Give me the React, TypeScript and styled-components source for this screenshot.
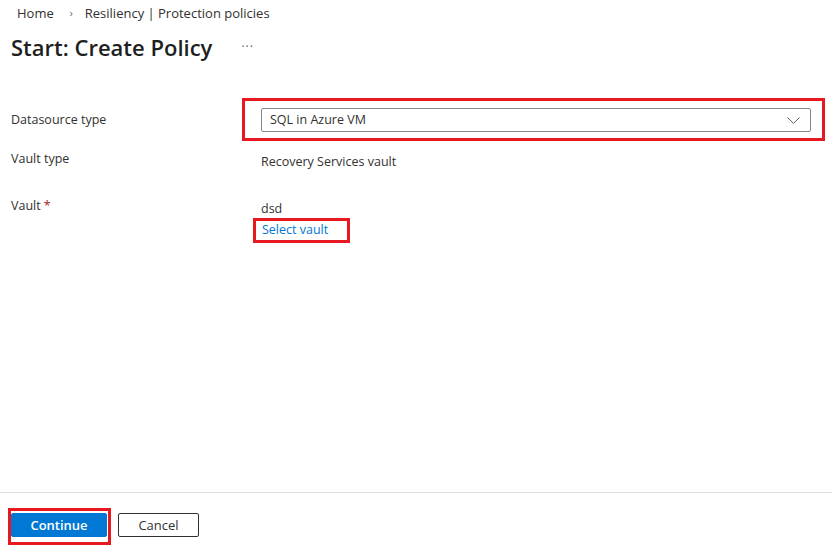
import React from "react";
import styled, { createGlobalStyle } from "styled-components";

const GlobalStyle = createGlobalStyle`
  html, body {
    margin: 0;
    padding: 0;
    background: #ffffff;
  }
  body {
    font-family: "Open Sans", "Noto Sans", sans-serif;
    font-size: 13px;
    color: #323130;
  }
`;

const Page = styled.div`
  display: flex;
  flex-direction: column;
  height: 545px;
  overflow: hidden;
`;

const Header = styled.header`
  padding: 4px 0 0 17px;
`;

const Breadcrumb = styled.nav`
  display: flex;
  align-items: center;
  line-height: 18px;
`;

const Crumb = styled.span`
  color: #323130;
`;

const CrumbSep = styled.span`
  margin: 0 12px 0 16px;
  font-size: 10px;
  color: #605e5c;
`;

const TitleRow = styled.div`
  display: flex;
  align-items: center;
  margin: 9px 0 0 -6px;
  line-height: 32px;
`;

const Title = styled.h1`
  margin: 0;
  font-size: 22px;
  font-weight: 600;
  color: #201f1e;
`;

const More = styled.span`
  margin-left: 29px;
  font-size: 12px;
  letter-spacing: 1px;
  color: #605e5c;
`;

const Form = styled.div`
  display: flex;
  flex-direction: column;
  margin-top: 35px;
  font-size: 12.5px;
`;

const Row = styled.div<{ $gap?: number; $center?: boolean }>`
  display: grid;
  grid-template-columns: 261px 1fr;
  align-items: ${(p) => (p.$center ? "center" : "start")};
  margin-top: ${(p) => p.$gap ?? 0}px;
  line-height: 18px;
`;

const Label = styled.div`
  padding-left: 11px;
`;

const Required = styled.span`
  color: #a4262c;
  margin-left: 3px;
`;

const Value = styled.div<{ $offset?: number }>`
  padding-top: ${(p) => p.$offset ?? 0}px;
  display: flex;
  flex-direction: column;
  align-items: flex-start;
`;

const Highlight = styled.div`
  border: 3px solid #e5191f;
`;

const SelectBox = styled(Highlight)`
  margin-left: -19px;
  margin-right: 7px;
  padding: 7px 11px 6px 16px;
`;

const Dropdown = styled.div`
  display: flex;
  align-items: center;
  justify-content: space-between;
  height: 22px;
  border: 1px solid #8a8886;
  border-radius: 2px;
  padding: 0 10px 0 8px;
  color: #323130;
`;

const LinkBox = styled(Highlight)`
  margin: 0 0 0 -8px;
  padding: 0 19px 1px 6px;
`;

const Link = styled.a`
  color: #0078d4;
  text-decoration: none;
`;

const Spacer = styled.div`
  flex: 1;
`;

const Footer = styled.footer`
  display: flex;
  align-items: flex-start;
  gap: 7px;
  border-top: 1px solid #e1dfdd;
  padding: 15px 0 0 8px;
`;

const ButtonBox = styled(Highlight)`
  padding: 2px 1px 5px 0;
`;

const Button = styled.button<{ $primary?: boolean }>`
  height: 24px;
  border-radius: 2px;
  font-family: inherit;
  font-size: 13px;
  padding: 0;
  cursor: pointer;
  width: ${(p) => (p.$primary ? 96 : 81)}px;
  font-weight: ${(p) => (p.$primary ? 600 : 400)};
  color: ${(p) => (p.$primary ? "#ffffff" : "#323130")};
  background: ${(p) => (p.$primary ? "#0078d4" : "#ffffff")};
  border: 1px solid ${(p) => (p.$primary ? "#0078d4" : "#323130")};
`;

const CancelButton = styled(Button)`
  margin-top: 5px;
`;

const Chevron = () => (
  <svg width="13" height="7" viewBox="0 0 13 7" fill="none">
    <path d="M0.5 0.5 L6.5 6.3 L12.5 0.5" stroke="#605e5c" strokeWidth="1" />
  </svg>
);

export default function App() {
  return (
    <Page>
      <GlobalStyle />
      <Header>
        <Breadcrumb>
          <Crumb>Home</Crumb>
          <CrumbSep>›</CrumbSep>
          <Crumb>Resiliency | Protection policies</Crumb>
        </Breadcrumb>
        <TitleRow>
          <Title>Start: Create Policy</Title>
          <More>···</More>
        </TitleRow>
      </Header>

      <Form>
        <Row $center>
          <Label>Datasource type</Label>
          <SelectBox>
            <Dropdown>
              <span>SQL in Azure VM</span>
              <Chevron />
            </Dropdown>
          </SelectBox>
        </Row>
        <Row $gap={9}>
          <Label>Vault type</Label>
          <Value $offset={3}>Recovery Services vault</Value>
        </Row>
        <Row $gap={26}>
          <Label>
            Vault<Required>*</Required>
          </Label>
          <Value $offset={3}>
            <span>dsd</span>
            <LinkBox>
              <Link href="#">Select vault</Link>
            </LinkBox>
          </Value>
        </Row>
      </Form>

      <Spacer />

      <Footer>
        <ButtonBox>
          <Button $primary>Continue</Button>
        </ButtonBox>
        <CancelButton>Cancel</CancelButton>
      </Footer>
    </Page>
  );
}
